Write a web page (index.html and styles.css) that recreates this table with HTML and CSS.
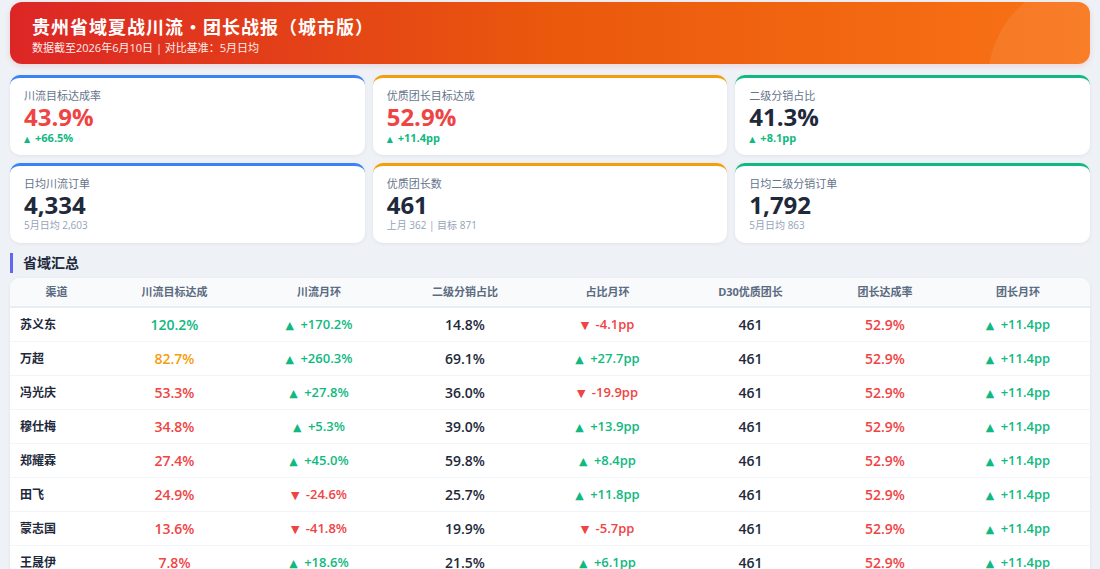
FILE: index.html
```html
<!DOCTYPE html>
<html lang="zh-CN">
<head>
<meta charset="utf-8">
<title>贵州省域夏战川流 · 团长战报</title>
<link rel="stylesheet" href="styles.css">
</head>
<body>
<div class="page">
  <header class="hero">
    <h1 class="hero-title">贵州省域夏战川流・团长战报（城市版）</h1>
    <div class="hero-sub">数据截至2026年6月10日 | 对比基准：5月日均</div>
  </header>

  <section class="cards">
    <div class="card blue">
      <div class="card-label">川流目标达成率</div>
      <div class="card-value red">43.9%</div>
      <div class="card-delta up"><span class="arw">▲</span> +66.5%</div>
    </div>
    <div class="card orange">
      <div class="card-label">优质团长目标达成</div>
      <div class="card-value red">52.9%</div>
      <div class="card-delta up"><span class="arw">▲</span> +11.4pp</div>
    </div>
    <div class="card green">
      <div class="card-label">二级分销占比</div>
      <div class="card-value">41.3%</div>
      <div class="card-delta up"><span class="arw">▲</span> +8.1pp</div>
    </div>
    <div class="card blue">
      <div class="card-label">日均川流订单</div>
      <div class="card-value">4,334</div>
      <div class="card-sub">5月日均 2,603</div>
    </div>
    <div class="card orange">
      <div class="card-label">优质团长数</div>
      <div class="card-value">461</div>
      <div class="card-sub">上月 362 | 目标 871</div>
    </div>
    <div class="card green">
      <div class="card-label">日均二级分销订单</div>
      <div class="card-value">1,792</div>
      <div class="card-sub">5月日均 863</div>
    </div>
  </section>

  <h2 class="section-title">省域汇总</h2>

  <div class="table-wrap">
    <table class="summary">
      <colgroup>
        <col class="c1"><col class="c2"><col class="c3"><col class="c4"><col class="c5"><col class="c6"><col class="c7"><col class="c8">
      </colgroup>
      <thead>
        <tr><th>渠道</th><th>川流目标达成</th><th>川流月环</th><th>二级分销占比</th><th>占比月环</th><th>D30优质团长</th><th>团长达成率</th><th>团长月环</th></tr>
      </thead>
      <tbody>
        <tr><td class="name">苏义东</td><td class="val t-green">120.2%</td><td class="chg up"><span class="arw">▲</span> +170.2%</td><td class="val">14.8%</td><td class="chg down"><span class="arw">▼</span> -4.1pp</td><td class="val">461</td><td class="val t-red">52.9%</td><td class="chg up"><span class="arw">▲</span> +11.4pp</td></tr>
        <tr><td class="name">万超</td><td class="val t-orange">82.7%</td><td class="chg up"><span class="arw">▲</span> +260.3%</td><td class="val">69.1%</td><td class="chg up"><span class="arw">▲</span> +27.7pp</td><td class="val">461</td><td class="val t-red">52.9%</td><td class="chg up"><span class="arw">▲</span> +11.4pp</td></tr>
        <tr><td class="name">冯光庆</td><td class="val t-red">53.3%</td><td class="chg up"><span class="arw">▲</span> +27.8%</td><td class="val">36.0%</td><td class="chg down"><span class="arw">▼</span> -19.9pp</td><td class="val">461</td><td class="val t-red">52.9%</td><td class="chg up"><span class="arw">▲</span> +11.4pp</td></tr>
        <tr><td class="name">穆仕梅</td><td class="val t-red">34.8%</td><td class="chg up"><span class="arw">▲</span> +5.3%</td><td class="val">39.0%</td><td class="chg up"><span class="arw">▲</span> +13.9pp</td><td class="val">461</td><td class="val t-red">52.9%</td><td class="chg up"><span class="arw">▲</span> +11.4pp</td></tr>
        <tr><td class="name">郑耀霖</td><td class="val t-red">27.4%</td><td class="chg up"><span class="arw">▲</span> +45.0%</td><td class="val">59.8%</td><td class="chg up"><span class="arw">▲</span> +8.4pp</td><td class="val">461</td><td class="val t-red">52.9%</td><td class="chg up"><span class="arw">▲</span> +11.4pp</td></tr>
        <tr><td class="name">田飞</td><td class="val t-red">24.9%</td><td class="chg down"><span class="arw">▼</span> -24.6%</td><td class="val">25.7%</td><td class="chg up"><span class="arw">▲</span> +11.8pp</td><td class="val">461</td><td class="val t-red">52.9%</td><td class="chg up"><span class="arw">▲</span> +11.4pp</td></tr>
        <tr><td class="name">蒙志国</td><td class="val t-red">13.6%</td><td class="chg down"><span class="arw">▼</span> -41.8%</td><td class="val">19.9%</td><td class="chg down"><span class="arw">▼</span> -5.7pp</td><td class="val">461</td><td class="val t-red">52.9%</td><td class="chg up"><span class="arw">▲</span> +11.4pp</td></tr>
        <tr><td class="name">王晟伊</td><td class="val t-red">7.8%</td><td class="chg up"><span class="arw">▲</span> +18.6%</td><td class="val">21.5%</td><td class="chg up"><span class="arw">▲</span> +6.1pp</td><td class="val">461</td><td class="val t-red">52.9%</td><td class="chg up"><span class="arw">▲</span> +11.4pp</td></tr>
      </tbody>
    </table>
  </div>
</div>
</body>
</html>
```

FILE: styles.css
```css
* { box-sizing: border-box; }

html, body {
  margin: 0;
  padding: 0;
  background: #eef2f7;
  font-family: "Open Sans", "Noto Sans CJK SC", sans-serif;
  color: #1e293b;
}

.page {
  padding: 2px 10px 10px;
}

.hero {
  position: relative;
  overflow: hidden;
  border-radius: 12px;
  padding: 12px 22px 8px;
  background: linear-gradient(90deg, #dc2626 0%, #ea580c 50%, #f97316 100%);
  color: #fff;
  box-shadow: 0 2px 6px rgba(220, 38, 38, 0.15);
}

.hero::after {
  content: "";
  position: absolute;
  width: 200px;
  height: 200px;
  border-radius: 50%;
  top: -22px;
  right: -98px;
  background: rgba(255, 255, 255, 0.08);
}

.hero-title {
  margin: 0;
  font-size: 18px;
  line-height: 26px;
  font-weight: 700;
  letter-spacing: 1px;
}

.hero-sub {
  font-size: 11px;
  line-height: 16px;
  opacity: 0.92;
}

.cards {
  margin-top: 11px;
  display: grid;
  grid-template-columns: repeat(3, 1fr);
  gap: 8px;
}

.card {
  background: #fff;
  border-radius: 10px;
  border-top: 3px solid #3b82f6;
  padding: 10px 14px 0;
  height: 80px;
  box-shadow: 0 1px 4px rgba(15, 23, 42, 0.06);
}
.card.blue { border-top-color: #3b82f6; }
.card.orange { border-top-color: #f59e0b; }
.card.green { border-top-color: #10b981; }

.card-label {
  font-size: 11px;
  line-height: 16px;
  color: #64748b;
}

.card-value {
  font-size: 24px;
  line-height: 26px;
  font-weight: 700;
  color: #1e293b;
}
.card-value.red { color: #ef4444; }

.card-delta {
  font-size: 11px;
  line-height: 16px;
  font-weight: 700;
}
.card-delta .arw {
  font-family: "DejaVu Sans", sans-serif;
  font-size: 8px;
  margin-right: 2px;
}
.card-sub {
  font-size: 10px;
  line-height: 15px;
  color: #94a3b8;
}

.up { color: #10b981; }
.down { color: #ef4444; }

.section-title {
  margin: 10px 0 5px;
  padding-left: 10px;
  border-left: 3px solid #6366f1;
  font-size: 14px;
  line-height: 20px;
  font-weight: 700;
  color: #1e293b;
}

.table-wrap {
  background: #fff;
  border-radius: 10px;
  overflow: hidden;
  box-shadow: 0 1px 4px rgba(15, 23, 42, 0.06);
}

.summary {
  width: 100%;
  border-collapse: collapse;
  table-layout: fixed;
}
.c1 { width: 93px; }
.c2 { width: 143px; }
.c3 { width: 146px; }
.c4 { width: 146px; }
.c5 { width: 139px; }
.c6 { width: 147px; }
.c7 { width: 122px; }
.c8 { width: 144px; }

.summary th {
  background: #f8fafc;
  color: #5b6b80;
  font-size: 11px;
  font-weight: 700;
  line-height: 15px;
  padding: 6px 0 7px;
  text-align: center;
  border-bottom: 2px solid #e9eef4;
}

.summary td {
  height: 34px;
  padding: 0;
  text-align: center;
  border-bottom: 1px solid #f1f5f9;
  font-size: 13px;
  font-weight: 600;
}

.summary td .arw {
  font-family: "DejaVu Sans", sans-serif;
  font-size: 11px;
  margin-right: 3px;
}

.summary td.name {
  text-align: left;
  padding-left: 10px;
  font-size: 12px;
  font-weight: 700;
  color: #1e293b;
}

.summary td.val {
  font-size: 14px;
  font-weight: 600;
  color: #1e293b;
}
.summary td.t-green { color: #10b981; }
.summary td.t-orange { color: #f59e0b; }
.summary td.t-red { color: #ef4444; }

.summary td.chg.up { color: #10b981; }
.summary td.chg.down { color: #ef4444; }
```
